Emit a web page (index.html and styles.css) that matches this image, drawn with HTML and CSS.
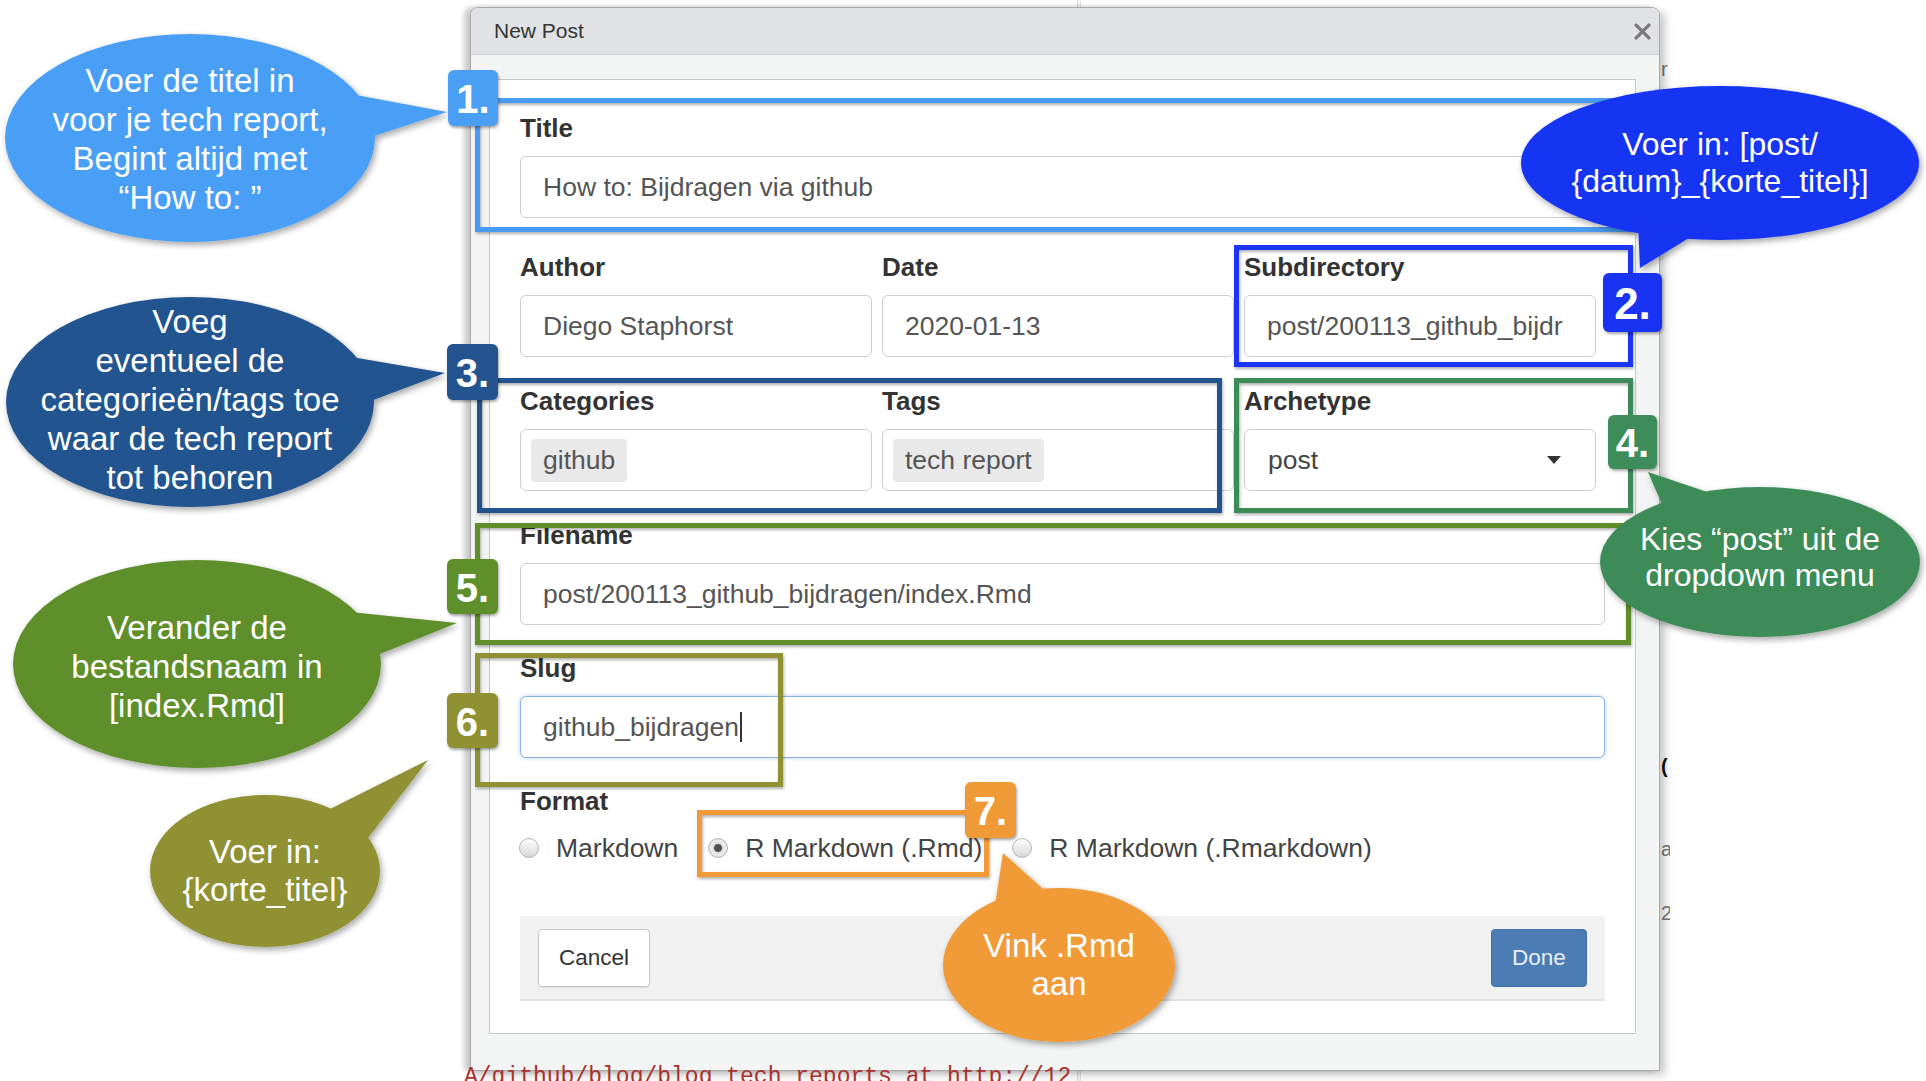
FILE: index.html
```html
<!DOCTYPE html>
<html lang="nl">
<head>
<meta charset="utf-8">
<title>New Post</title>
<link rel="stylesheet" href="styles.css">
</head>
<body>
<div class="page">
  <div class="bg-divider"></div>
  <div class="bg-edge"><span class="e1">r</span><span class="e2">(</span><span class="e3">a</span><span class="e4">2</span></div>

  <div class="dialog">
    <div class="titlebar">
      <span class="dialog-title">New Post</span>
      <svg class="close" viewBox="0 0 16 16" width="17" height="17"><path d="M2 2 L14 14 M14 2 L2 14" stroke="#7b7b7b" stroke-width="3.2" stroke-linecap="round"/></svg>
    </div>
    <div class="dialog-body">
      <div class="panel">
        <div class="field f-title">
          <span class="label">Title</span>
          <div class="input">How to: Bijdragen via github</div>
        </div>
        <div class="row3 row-a">
          <div class="field">
            <span class="label">Author</span>
            <div class="input">Diego Staphorst</div>
          </div>
          <div class="field">
            <span class="label">Date</span>
            <div class="input">2020-01-13</div>
          </div>
          <div class="field">
            <span class="label">Subdirectory</span>
            <div class="input"><span class="clip">post/200113_github_bijdr</span></div>
          </div>
        </div>
        <div class="row3 row-b">
          <div class="field">
            <span class="label">Categories</span>
            <div class="input input-chips"><span class="chip">github</span></div>
          </div>
          <div class="field">
            <span class="label">Tags</span>
            <div class="input input-chips"><span class="chip">tech report</span></div>
          </div>
          <div class="field">
            <span class="label">Archetype</span>
            <div class="input input-select"><span>post</span><span class="caret"></span></div>
          </div>
        </div>
        <div class="field f-file">
          <span class="label">Filename</span>
          <div class="input">post/200113_github_bijdragen/index.Rmd</div>
        </div>
        <div class="field f-slug">
          <span class="label">Slug</span>
          <div class="input input-focus">github_bijdragen<span class="cursor"></span></div>
        </div>
        <div class="field f-format">
          <span class="label label-format">Format</span>
          <div class="radios">
            <div class="radio-item"><span class="radio"></span><span>Markdown</span></div>
            <div class="radio-item"><span class="radio radio-on"></span><span>R Markdown (.Rmd)</span></div>
            <div class="radio-item"><span class="radio"></span><span>R Markdown (.Rmarkdown)</span></div>
          </div>
        </div>
        <div class="footer">
          <button class="btn btn-cancel">Cancel</button>
          <button class="btn btn-done">Done</button>
        </div>
      </div>
    </div>
  </div>

  <div class="console">A/github/blog/blog_tech_reports at http://12</div>

  <div class="annot">
    <svg class="annot-svg" width="1926" height="1081" viewBox="0 0 1926 1081">
      <defs>
        <filter id="sh" x="-20%" y="-20%" width="140%" height="140%">
          <feDropShadow dx="2" dy="3" stdDeviation="3" flood-color="#000" flood-opacity="0.35"/>
        </filter>
        <filter id="shb" x="-5%" y="-5%" width="110%" height="110%">
          <feDropShadow dx="1" dy="2" stdDeviation="1.5" flood-color="#000" flood-opacity="0.3"/>
        </filter>
      </defs>
      <g fill="none" stroke-width="5" filter="url(#shb)">
        <rect x="477.5" y="100.5" width="1154" height="129" stroke="#4a9cf3"/>
        <rect x="1236.5" y="247.5" width="394" height="117" stroke="#1b34f2"/>
        <rect x="479.5" y="380.5" width="740" height="130" stroke="#23538e"/>
        <rect x="1236.5" y="380.5" width="394" height="130" stroke="#3e8c58"/>
        <rect x="477.5" y="525.5" width="1151" height="117" stroke="#5e8f2b"/>
        <rect x="477.5" y="655.5" width="303" height="129" stroke="#8f9132"/>
        <rect x="699.5" y="812.5" width="287" height="62" stroke="#f09a37"/>
      </g>
      <g filter="url(#sh)" fill="#4a9ff5">
        <ellipse cx="190" cy="138" rx="185" ry="104"/>
        <polygon points="340,92 447,112 362,140"/>
      </g>
      <g filter="url(#sh)" fill="#1834f2">
        <ellipse cx="1720" cy="163" rx="199" ry="77"/>
        <polygon points="1640,268 1638,222 1702,230"/>
      </g>
      <g filter="url(#sh)" fill="#23548f">
        <ellipse cx="190" cy="402" rx="184" ry="105"/>
        <polygon points="340,355 445,373 360,405"/>
      </g>
      <g filter="url(#sh)" fill="#3e8c59">
        <ellipse cx="1760" cy="562" rx="160" ry="75"/>
        <polygon points="1648,472 1722,497 1668,518"/>
      </g>
      <g filter="url(#sh)" fill="#5f8f2b">
        <ellipse cx="197" cy="664" rx="184" ry="104"/>
        <polygon points="350,612 457,623 365,660"/>
      </g>
      <g filter="url(#sh)" fill="#8f9132">
        <ellipse cx="265" cy="871" rx="115" ry="76"/>
        <polygon points="318,815 428,760 368,838"/>
      </g>
      <g filter="url(#sh)" fill="#f09a37">
        <ellipse cx="1059" cy="965" rx="116" ry="77"/>
        <polygon points="1003,853 995,905 1050,895"/>
      </g>
    </svg>

    <div class="badge badge-1">1.</div>
    <div class="badge badge-2">2.</div>
    <div class="badge badge-3">3.</div>
    <div class="badge badge-4">4.</div>
    <div class="badge badge-5">5.</div>
    <div class="badge badge-6">6.</div>
    <div class="badge badge-7">7.</div>

    <div class="btext bt-1">Voer de titel in<br>voor je tech report,<br>Begint altijd met<br>“How to: ”</div>
    <div class="btext bt-2">Voer in: [post/<br>{datum}_{korte_titel}]</div>
    <div class="btext bt-3">Voeg<br>eventueel de<br>categorieën/tags toe<br>waar de tech report<br>tot behoren</div>
    <div class="btext bt-4">Kies “post” uit de<br>dropdown menu</div>
    <div class="btext bt-5">Verander de<br>bestandsnaam in<br>[index.Rmd]</div>
    <div class="btext bt-6">Voer in:<br>{korte_titel}</div>
    <div class="btext bt-7">Vink .Rmd<br>aan</div>
  </div>
</div>
</body>
</html>
```

FILE: styles.css
```css
* { box-sizing: border-box; }
html, body { margin: 0; padding: 0; }
body {
  background: #ffffff;
  font-family: "Liberation Sans", Arial, Helvetica, sans-serif;
}
.page {
  position: relative;
  width: 1926px;
  height: 1081px;
  overflow: hidden;
  padding: 7px 0 0 470px;
  background: #ffffff;
}

/* background (RStudio behind the dialog) */
.bg-divider {
  position: absolute;
  left: 1077px;
  top: 0;
  width: 4px;
  height: 100%;
  border-left: 1px solid #d8d8d8;
  border-right: 1px solid #e4e4e4;
  background: #f6f6f6;
}
.bg-edge {
  position: absolute;
  left: 1660px;
  top: 0;
  width: 10px;
  height: 100%;
  overflow: hidden;
  font-size: 20px;
  color: #777;
}
.bg-edge span { position: absolute; left: 1px; }
.bg-edge .e1 { top: 58px; }
.bg-edge .e2 { top: 755px; color: #111; font-weight: bold; }
.bg-edge .e3 { top: 838px; }
.bg-edge .e4 { top: 902px; }

.console {
  position: absolute;
  left: 464px;
  top: 1064px;
  z-index: 2;
  font-family: "Liberation Mono", "Courier New", monospace;
  font-size: 23px;
  line-height: 26px;
  color: #a8322d;
  white-space: nowrap;
}

/* dialog */
.dialog {
  position: relative;
  z-index: 1;
  width: 1190px;
  border: 1px solid #a9a9a9;
  border-radius: 8px 8px 0 0;
  background: #f3f4f4;
  box-shadow: -6px 0 5px rgba(0, 0, 0, 0.2), 5px 4px 8px rgba(0, 0, 0, 0.22);
}
.titlebar {
  height: 47px;
  display: flex;
  align-items: center;
  justify-content: space-between;
  padding: 0 8px 0 23px;
  background: #e1e2e6;
  border-bottom: 1px solid #cfd0d4;
  border-radius: 7px 7px 0 0;
}
.dialog-title {
  font-size: 21px;
  color: #333;
}
.close { display: block; }
.dialog-body {
  padding: 24px 23px 36px 18px;
}
.panel {
  background: #ffffff;
  border: 1px solid #c8c8c8;
  padding: 33px 30px 32px 30px;
}

.label {
  display: block;
  font-weight: bold;
  font-size: 26px;
  line-height: 30px;
  color: #333;
  margin-bottom: 13px;
}
.input {
  height: 62px;
  border: 1px solid #cecece;
  border-radius: 6px;
  background: #fff;
  display: flex;
  align-items: center;
  padding: 0 22px;
  font-size: 26.5px;
  color: #555;
  white-space: nowrap;
  overflow: hidden;
}
.clip {
  display: block;
  overflow: hidden;
  white-space: nowrap;
  flex: 1;
  min-width: 0;
}
.f-title { margin-bottom: 34px; }
.row3 {
  display: grid;
  grid-template-columns: 352px 352px 352px;
  column-gap: 10px;
}
.row-a { margin-bottom: 29px; }
.row-b { margin-bottom: 29px; }
.f-file { margin-bottom: 28px; }
.f-slug { margin-bottom: 28px; }

.input-chips { padding-left: 10px; }
.chip {
  display: inline-flex;
  align-items: center;
  height: 43px;
  padding: 0 12px;
  background: #e9e9e9;
  border-radius: 4px;
  color: #555;
}
.input-select {
  justify-content: space-between;
  padding: 0 34px 0 23px;
  color: #444;
}
.caret {
  width: 0;
  height: 0;
  border-left: 7px solid transparent;
  border-right: 7px solid transparent;
  border-top: 8px solid #333;
}
.input-focus {
  border-color: #8ab6e6;
  box-shadow: 0 0 4px rgba(90, 150, 225, 0.45);
}
.cursor {
  display: inline-block;
  width: 2px;
  height: 30px;
  background: #333;
  margin-left: 1px;
}

.label-format { margin-bottom: 17px; }
.radios {
  display: flex;
  align-items: center;
  height: 30px;
  font-size: 26.5px;
  color: #444;
}
.radio-item {
  display: flex;
  align-items: center;
  margin-right: 31px;
}
.radio {
  width: 20px;
  height: 20px;
  border-radius: 50%;
  border: 1px solid #b4b4b4;
  background: linear-gradient(#fdfdfd, #d8d8d8);
  margin: 0 17px 0 -1px;
}
.radio-on {
  background: radial-gradient(circle, #4f4f4f 0, #4f4f4f 3.5px, #dcdcdc 4.5px, #ececec 7px, #d2d2d2 100%);
}

.footer {
  margin-top: 53px;
  height: 85px;
  display: flex;
  align-items: center;
  justify-content: space-between;
  padding: 0 18px;
  background: #f1f1f1;
  border-bottom: 2px solid #e1e1e1;
}
.btn {
  height: 58px;
  border-radius: 4px;
  font-family: "Liberation Sans", Arial, sans-serif;
  font-size: 22.5px;
  padding: 0;
}
.btn-cancel {
  width: 112px;
  background: #ffffff;
  border: 1px solid #c9c9c9;
  color: #333;
  box-shadow: 0 1px 1px rgba(0, 0, 0, 0.08);
}
.btn-done {
  width: 96px;
  background: #4b7cb4;
  border: 1px solid #4070a8;
  color: #e9eff6;
}

/* annotations */
.annot {
  position: absolute;
  left: 0;
  top: 0;
  width: 1926px;
  height: 1081px;
  z-index: 5;
  pointer-events: none;
}
.annot-svg {
  position: absolute;
  left: 0;
  top: 0;
}
.badge {
  position: absolute;
  display: flex;
  align-items: center;
  justify-content: center;
  border-radius: 6px;
  color: #fff;
  font-weight: bold;
  font-size: 40px;
  line-height: 1;
  padding-top: 2px;
  box-shadow: 1px 2px 3px rgba(0, 0, 0, 0.35);
}
.badge-1 { left: 448px; top: 70px; width: 50px; height: 56px; background: #4a9ff5; }
.badge-2 { left: 1603px; top: 273px; width: 59px; height: 59px; background: #1834f2; font-size: 44px; }
.badge-3 { left: 447px; top: 344px; width: 51px; height: 56px; background: #23548f; }
.badge-4 { left: 1608px; top: 415px; width: 49px; height: 54px; background: #3e8c59; }
.badge-5 { left: 447px; top: 559px; width: 51px; height: 55px; background: #5f8f2b; }
.badge-6 { left: 447px; top: 693px; width: 51px; height: 55px; background: #8f9132; }
.badge-7 { left: 965px; top: 782px; width: 51px; height: 56px; background: #f09a37; }

.btext {
  position: absolute;
  display: flex;
  align-items: center;
  justify-content: center;
  text-align: center;
  color: #ffffff;
  font-size: 33px;
  line-height: 39px;
  white-space: nowrap;
}
.bt-1 { left: 5px; top: 35px; width: 370px; height: 208px; }
.bt-2 { left: 1521px; top: 86px; width: 398px; height: 154px; font-size: 32px; line-height: 37px; }
.bt-3 { left: 6px; top: 294px; width: 368px; height: 210px; }
.bt-4 { left: 1600px; top: 482px; width: 320px; height: 150px; font-size: 32px; line-height: 36px; }
.bt-5 { left: 13px; top: 562px; width: 368px; height: 208px; }
.bt-6 { left: 150px; top: 795px; width: 230px; height: 152px; line-height: 38px; }
.bt-7 { left: 943px; top: 888px; width: 232px; height: 154px; line-height: 38px; }
```
